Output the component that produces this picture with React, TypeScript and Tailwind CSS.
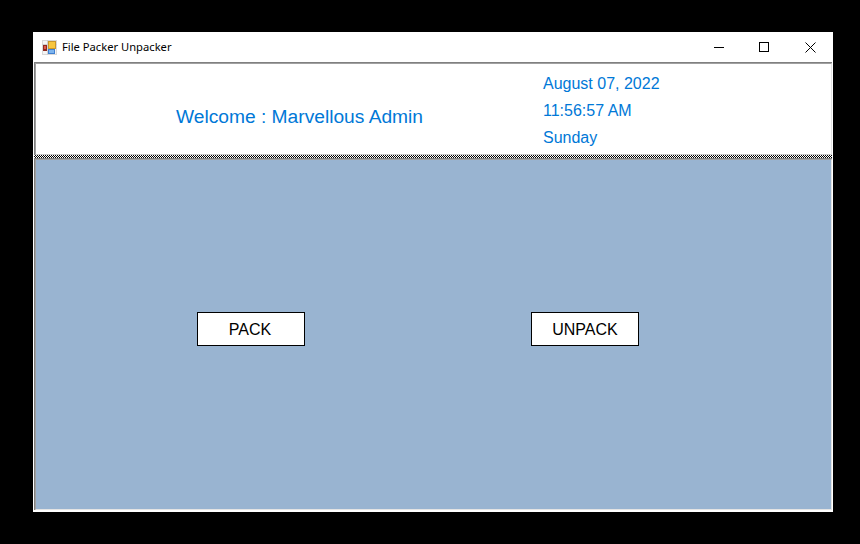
function AppIcon() {
  return (
    <svg width="15" height="15" viewBox="0 0 15 15" className="shrink-0" shapeRendering="crispEdges">
      <rect x="0" y="0" width="15" height="15" fill="#d8d8d8" />
      <rect x="1" y="1" width="13" height="13" fill="#f4f4f4" />
      <rect x="5" y="0" width="1" height="15" fill="#d0d0d0" />
      <rect x="0" y="4" width="15" height="1" fill="#d0d0d0" />
      <rect x="6" y="1" width="8" height="8" fill="#c9962c" />
      <rect x="7" y="2" width="6" height="6" fill="#f7c63f" />
      <rect x="1" y="5" width="4" height="6" fill="#8f2a20" />
      <rect x="2" y="6" width="2" height="3" fill="#e05a4a" />
      <rect x="6" y="9" width="7" height="5" fill="#3f7fd0" />
      <rect x="7" y="10" width="5" height="3" fill="#7db4ee" />
    </svg>
  );
}

function WindowButtons() {
  return (
    <div className="ml-auto flex items-center">
      <div className="w-[46px] flex justify-center pl-[2px]">
        <svg width="10" height="10" viewBox="0 0 10 10" shapeRendering="crispEdges">
          <path d="M0 5.5H10" stroke="#000" strokeWidth="1" />
        </svg>
      </div>
      <div className="w-[46px] flex justify-center">
        <svg width="10" height="10" viewBox="0 0 10 10" shapeRendering="crispEdges">
          <rect x="0.5" y="0.5" width="9" height="9" fill="none" stroke="#000" strokeWidth="1" />
        </svg>
      </div>
      <div className="w-[46px] flex justify-center">
        <svg width="11" height="11" viewBox="0 0 11 11">
          <path d="M0.5 0.5L10.5 10.5M10.5 0.5L0.5 10.5" stroke="#000" strokeWidth="1" />
        </svg>
      </div>
    </div>
  );
}

export default function App() {
  return (
    <div className="w-[860px] h-[544px] bg-black pt-[32px] pl-[33px] font-['Liberation_Sans',sans-serif]">
      <div className="w-[800px] h-[480px] bg-white flex flex-col">
        {/* Title bar */}
        <div className="h-[30px] flex items-center pl-[9px] shrink-0">
          <AppIcon />
          <span className="ml-[5px] text-[11.2px] text-black font-['Noto_Sans',sans-serif]">File Packer Unpacker</span>
          <WindowButtons />
        </div>

        <div className="flex-1 flex flex-col ml-px mr-px mb-[2px]">
          {/* Header */}
          <div className="h-[93px] shrink-0 flex flex-col border-l border-t border-[#808080]">
            <div className="flex-1 bg-white border-l border-t border-b border-r border-l-[#a0a0a0] border-t-[#a0a0a0] border-b-[#c8c8c8] border-r-[#e3e3e3] flex items-center pl-[140px]">
              <span className="text-[19.2px] text-[#0078d7] w-[367px] mt-[16px] leading-none">Welcome : Marvellous Admin</span>
              <div className="flex flex-col text-[16px] leading-[27px] text-[#0078d7] mt-[3px]">
                <span>August 07, 2022</span>
                <span>11:56:57 AM</span>
                <span>Sunday</span>
              </div>
            </div>
          </div>

          {/* Splitter */}
          <div className="h-[3px] shrink-0 bg-[repeating-conic-gradient(#000_0_25%,#fff_0_50%)] bg-[length:2px_2px]" />

          {/* Body */}
          <div className="flex-1 flex flex-col border-l border-t border-[#808080]">
            <div className="flex-1 bg-[#99b4d1] border-l border-t border-r border-b border-l-[#a0a0a0] border-t-[#a0a0a0] border-r-[#e3e3e3] border-b-[#e3e3e3] pl-[161px] pt-[152px] flex gap-[226px]">
              <button className="w-[108px] h-[34px] bg-white border border-black text-[16px] text-black pr-[2px] pt-[2px]">PACK</button>
              <button className="w-[108px] h-[34px] bg-white border border-black text-[16px] text-black pt-[2px]">UNPACK</button>
            </div>
          </div>
        </div>
      </div>
    </div>
  );
}
